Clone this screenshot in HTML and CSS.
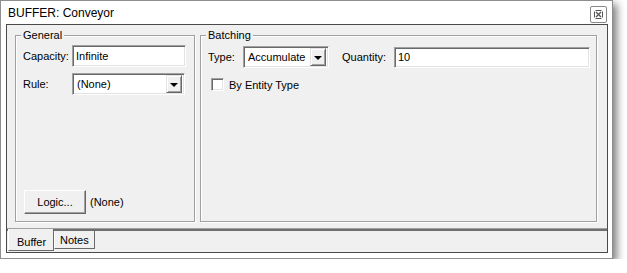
FILE: index.html
```html
<!DOCTYPE html>
<html lang="en">
<head>
    <meta charset="UTF-8">
    <title>BUFFER: Conveyor</title>
    <link rel="stylesheet" href="styles.css">
</head>
<body>
<div class="window">
    <div class="titlebar">
        <span class="title">BUFFER: Conveyor</span>
        <div class="close">
            <svg width="11" height="11" viewBox="0 0 11 11">
                <path d="M1.5 2.5v6M9.5 2.5v6M2.5 1.5h6M2.5 9.5h6" stroke="#555" fill="none"/>
                <path d="M3 3l5 5M8 3l-5 5" stroke="#555" stroke-width="1.3" fill="none"/>
            </svg>
        </div>
    </div>
    <div class="panel">
        <div class="page">
            <div class="group general">
                <span class="legend">General</span>
                <div class="row">
                    <span class="label">Capacity:</span>
                    <div class="field cap">Infinite</div>
                </div>
                <div class="row rule-row">
                    <span class="label">Rule:</span>
                    <div class="field select rule">
                        <span>(None)</span>
                        <span class="drop"><i class="arrow"></i></span>
                    </div>
                </div>
                <div class="row logic-row">
                    <div class="btn">Logic...</div>
                    <span>(None)</span>
                </div>
            </div>
            <div class="group batching">
                <span class="legend">Batching</span>
                <div class="row">
                    <span class="label-type">Type:</span>
                    <div class="field select type">
                        <span>Accumulate</span>
                        <span class="drop"><i class="arrow"></i></span>
                    </div>
                    <span class="label-qty">Quantity:</span>
                    <div class="field qty">10</div>
                </div>
                <div class="row check-row">
                    <span class="checkbox"></span>
                    <span>By Entity Type</span>
                </div>
            </div>
        </div>
        <div class="tabs">
            <div class="tab active">Buffer</div>
            <div class="tab">Notes</div>
        </div>
    </div>
</div>
</body>
</html>
```

FILE: styles.css
```css
body {
    margin: 0;
    padding: 0;
    background: #fff;
    font-family: "Liberation Sans", Arial, sans-serif;
    font-size: 11px;
    color: #000;
}
.window {
    width: 613px;
    height: 259px;
    box-sizing: border-box;
    border: 1px solid #8e8e8e;
    background: #fff;
    padding: 0 4px 5px 5px;
    box-shadow: 4px 4px 8px rgba(0, 0, 0, 0.5);
}
.titlebar {
    height: 23px;
    display: flex;
    align-items: center;
    justify-content: space-between;
}
.title {
    padding-left: 2px;
    font-size: 12px;
    margin-top: 1px;
}
.close {
    width: 15px;
    height: 15px;
    border: 1px solid #8a8a8a;
    border-radius: 2px;
    display: flex;
    align-items: center;
    justify-content: center;
    margin-top: 4px;
    margin-right: 1px;
}
.panel {
    height: 229px;
    box-sizing: border-box;
    border: 1px solid #4a4a4a;
    background: #f0f0f0;
    display: flex;
    flex-direction: column;
}
.page {
    height: 206px;
    box-sizing: border-box;
    padding: 10px 8px 0;
    border-bottom: 2px solid #6f6f6f;
    box-shadow: 0 -1px 0 #a0a0a0 inset;
    display: flex;
    gap: 5px;
    align-items: flex-start;
}
.group {
    position: relative;
    height: 187px;
    box-sizing: border-box;
    border: 1px solid #a0a0a0;
    box-shadow: 1px 1px 0 #fff, 1px 1px 0 #fff inset;
    display: flex;
    flex-direction: column;
}
.general {
    width: 180px;
    padding: 9px 0 7px 7px;
}
.batching {
    width: 397px;
    padding: 10px 0 0 7px;
}
.legend {
    position: absolute;
    top: -7px;
    left: 5px;
    padding: 0 2px;
    background: #f0f0f0;
}
.row {
    display: flex;
    align-items: center;
}
.rule-row {
    margin-top: 6px;
}
.logic-row {
    margin-top: auto;
    gap: 4px;
}
.label {
    width: 49px;
}
.field {
    height: 22px;
    box-sizing: border-box;
    background: #fff;
    border: 1px solid;
    border-color: #a0a0a0 #fff #fff #a0a0a0;
    box-shadow: inset 1px 1px 0 #696969, inset -1px -1px 0 #e3e3e3;
    display: flex;
    align-items: center;
    padding-left: 3px;
}
.cap {
    width: 114px;
}
.select {
    justify-content: space-between;
    padding-left: 4px;
    padding-right: 2px;
}
.rule {
    width: 113px;
}
.drop {
    width: 16px;
    height: 18px;
    box-sizing: border-box;
    background: #f0f0f0;
    border: 1px solid;
    border-color: #e3e3e3 #696969 #696969 #e3e3e3;
    box-shadow: inset 1px 1px 0 #fff, inset -1px -1px 0 #a0a0a0;
    display: flex;
    align-items: center;
    justify-content: center;
}
.arrow {
    width: 0;
    height: 0;
    border-left: 4px solid transparent;
    border-right: 4px solid transparent;
    border-top: 4px solid #000;
    margin-top: 1px;
}
.btn {
    width: 62px;
    height: 24px;
    box-sizing: border-box;
    margin-left: 1px;
    border: 1px solid;
    border-color: #fff #696969 #696969 #fff;
    box-shadow: inset -1px -1px 0 #a0a0a0;
    display: flex;
    align-items: center;
    justify-content: center;
}
.label-type {
    width: 35px;
}
.type {
    width: 86px;
}
.label-qty {
    margin-left: 13px;
    width: 52px;
}
.qty {
    width: 196px;
    height: 21px;
}
.check-row {
    margin-top: 10px;
    gap: 5px;
}
.checkbox {
    width: 13px;
    height: 13px;
    box-sizing: border-box;
    margin-left: 3px;
    background: #fff;
    border: 1px solid;
    border-color: #a0a0a0 #fff #fff #a0a0a0;
    box-shadow: inset 1px 1px 0 #696969, inset -1px -1px 0 #e3e3e3;
}
.tabs {
    display: flex;
    align-items: flex-start;
    padding-left: 1px;
}
.tab {
    height: 18px;
    box-sizing: border-box;
    padding: 0 5px;
    border: 1px solid;
    border-top: 0;
    border-color: #fff #696969 #696969 #fff;
    display: flex;
    align-items: center;
}
.tab.active {
    height: 22px;
    margin-top: -2px;
    width: 46px;
    padding: 4px 0 0 8px;
    background: #f0f0f0;
    position: relative;
}
```
